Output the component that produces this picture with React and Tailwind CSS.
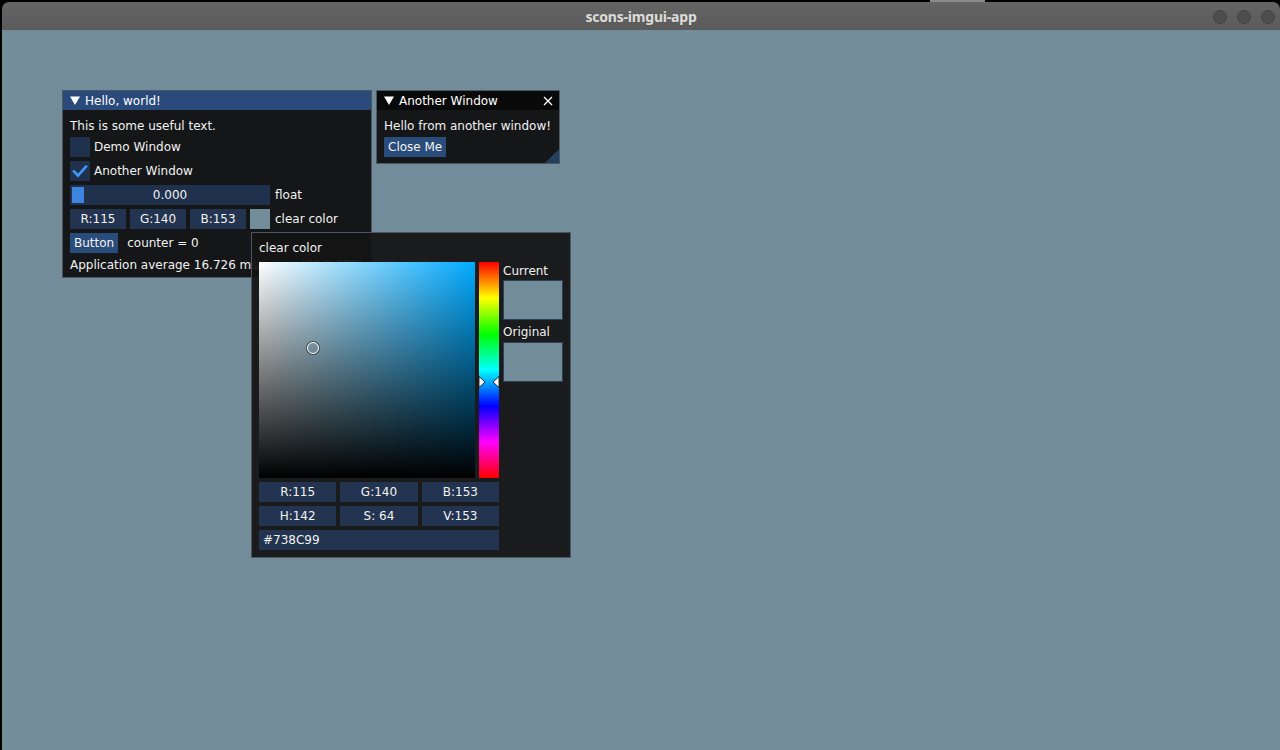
import React from "react";

const font = "font-['DejaVu_Sans',sans-serif]";

const Frame = ({ className = "", children }) => (
  <div
    className={`h-5 flex items-center justify-center bg-[#22344f] text-[12px] text-[#f2f2f2] ${className}`}
  >
    {children}
  </div>
);

const Triangle = () => (
  <svg width="10" height="9" viewBox="0 0 10 9" className="shrink-0">
    <path d="M0 0.5 H10 L5 9 Z" fill="#ffffff" />
  </svg>
);

const Check = () => (
  <svg width="20" height="20" viewBox="0 0 20 20">
    <path
      d="M4 10.5 L8 14.5 L16 5.5"
      fill="none"
      stroke="#4296fa"
      strokeWidth="2.6"
      strokeLinecap="square"
    />
  </svg>
);

const HelloWindow = () => (
  <div className="absolute left-[62px] top-[90px] w-[310px] h-[188px] border border-[#4b5662] bg-[rgba(15,15,15,0.94)] overflow-hidden">
    <div className="h-[19px] bg-[#294a7a] flex items-center gap-[5px] pl-[7px] text-[12px] text-white">
      <Triangle />
      <span>Hello, world!</span>
    </div>
    <div className="px-[7px] pt-[8px] flex flex-col gap-[4px] text-[12px] text-[#f2f2f2]">
      <div className="h-[15px] flex items-center">This is some useful text.</div>
      <div className="flex items-center gap-[4px]">
        <div className="w-5 h-5 bg-[#1f314c]" />
        <span>Demo Window</span>
      </div>
      <div className="flex items-center gap-[4px]">
        <div className="w-5 h-5 bg-[#1f314c]">
          <Check />
        </div>
        <span>Another Window</span>
      </div>
      <div className="flex items-center gap-[5px]">
        <div className="relative w-[200px] h-5 bg-[#1f314c] flex items-center justify-center">
          <div className="absolute left-[2px] top-[2px] w-[12px] h-4 bg-[#3d85e0]" />
          <span>0.000</span>
        </div>
        <span>float</span>
      </div>
      <div className="flex items-center gap-[4px]">
        <Frame className="w-[56px] bg-[#1f314c]">R:115</Frame>
        <Frame className="w-[56px] bg-[#1f314c]">G:140</Frame>
        <Frame className="w-[56px] bg-[#1f314c]">B:153</Frame>
        <div className="w-5 h-5 bg-[#738c99]" />
        <span className="ml-[1px]">clear color</span>
      </div>
      <div className="flex items-center gap-[9px]">
        <div className="h-5 px-[4px] bg-[#294c7a] flex items-center">Button</div>
        <span>counter = 0</span>
      </div>
      <div className="h-[15px] flex items-center whitespace-nowrap">
        Application average 16.726 ms/frame (59.8 FPS)
      </div>
    </div>
  </div>
);

const AnotherWindow = () => (
  <div className="absolute left-[376px] top-[90px] w-[184px] h-[74px] border border-[#4b5662] bg-[rgba(15,15,15,0.94)] overflow-hidden">
    <div className="h-[19px] bg-[#0a0a0a] flex items-center gap-[5px] pl-[7px] pr-[6px] text-[12px] text-white">
      <Triangle />
      <span className="flex-1">Another Window</span>
      <svg width="10" height="10" viewBox="0 0 10 10">
        <path d="M1 1 L9 9 M9 1 L1 9" stroke="#ffffff" strokeWidth="1.3" />
      </svg>
    </div>
    <div className="px-[7px] pt-[8px] flex flex-col gap-[4px] text-[12px] text-[#f2f2f2]">
      <div className="h-[15px] flex items-center whitespace-nowrap">Hello from another window!</div>
      <div className="flex">
        <div className="h-5 px-[4px] bg-[#294c7a] flex items-center">Close Me</div>
      </div>
    </div>
    <svg className="absolute right-0 bottom-0" width="14" height="14" viewBox="0 0 14 14">
      <path d="M14 0 L14 14 L0 14 Z" fill="#253f5e" />
    </svg>
  </div>
);

const ColorPicker = () => (
  <div className="absolute left-[251px] top-[232px] w-[320px] h-[326px] border border-[#4b5662] bg-[rgba(20,20,20,0.94)] px-[7px] pt-[7px] text-[12px] text-[#f2f2f2]">
    <div className="h-[16px] flex items-center">clear color</div>
    <div className="mt-[6px] flex gap-[4px]">
      <div className="relative w-[216px] h-[216px] bg-[linear-gradient(to_right,#ffffff,#00aaff)]">
        <div className="absolute inset-0 bg-[linear-gradient(to_bottom,rgba(0,0,0,0),#000000)]" />
        <div className="absolute left-[48px] top-[80px] w-[12px] h-[12px] rounded-full border-[1.5px] border-white shadow-[0_0_0_1px_rgba(0,0,0,0.5)]" />
      </div>
      <div className="relative w-5 h-[216px] bg-[linear-gradient(to_bottom,#ff0000,#ffff00,#00ff00,#00ffff,#0000ff,#ff00ff,#ff0000)]">
        <svg className="absolute left-0 top-[114px]" width="20" height="12" viewBox="0 0 20 12">
          <path d="M0 0.5 L6 6 L0 11.5 Z" fill="#ffffff" stroke="#000" strokeWidth="0.8" />
          <path d="M20 0.5 L14 6 L20 11.5 Z" fill="#ffffff" stroke="#000" strokeWidth="0.8" />
        </svg>
      </div>
      <div className="flex flex-col">
        <div className="h-[16px] mt-[1px] flex items-center">Current</div>
        <div className="mt-[1px] w-[60px] h-[40px] bg-[#738c99] border border-[#2c3e5a]" />
        <div className="h-[16px] mt-[4px] flex items-center">Original</div>
        <div className="mt-[2px] w-[60px] h-[40px] bg-[#738c99] border border-[#2c3e5a]" />
      </div>
    </div>
    <div className="mt-[4px] w-[240px] flex flex-col gap-[4px]">
      <div className="flex gap-[4px]">
        <Frame className="flex-1">R:115</Frame>
        <Frame className="flex-1">G:140</Frame>
        <Frame className="flex-1">B:153</Frame>
      </div>
      <div className="flex gap-[4px]">
        <Frame className="flex-1">H:142</Frame>
        <Frame className="flex-1">S: 64</Frame>
        <Frame className="flex-1">V:153</Frame>
      </div>
      <Frame className="justify-start px-[4px]">#738C99</Frame>
    </div>
  </div>
);

export default function App() {
  return (
    <div className={`relative w-[1280px] h-[750px] bg-black overflow-hidden ${font}`}>
      <div className="absolute left-[930px] top-0 w-[55px] h-[2px] bg-[#8a8a8a]" />
      <div className="absolute left-[2px] right-0 top-[2px] h-[28px] rounded-tl-[7px] rounded-tr-[7px] bg-[linear-gradient(to_bottom,#646464,#5b5b5b)] flex items-center justify-center">
        <span className="font-['Noto_Sans',sans-serif] font-bold text-[14px] text-[#dcdcd8] tracking-[-0.2px]">
          scons-imgui-app
        </span>
        <div className="absolute right-[5px] top-[8px] flex gap-[10px]">
          <div className="w-[14px] h-[14px] rounded-full bg-[#4d4d4d] border border-[#454545]" />
          <div className="w-[14px] h-[14px] rounded-full bg-[#4d4d4d] border border-[#454545]" />
          <div className="w-[14px] h-[14px] rounded-full bg-[#4d4d4d] border border-[#454545]" />
        </div>
      </div>
      <div className="absolute left-[2px] right-0 top-[30px] bottom-0 bg-[#738c99]">
        <div className="relative -left-[2px] -top-[30px]">
          <HelloWindow />
          <AnotherWindow />
          <ColorPicker />
        </div>
      </div>
    </div>
  );
}
